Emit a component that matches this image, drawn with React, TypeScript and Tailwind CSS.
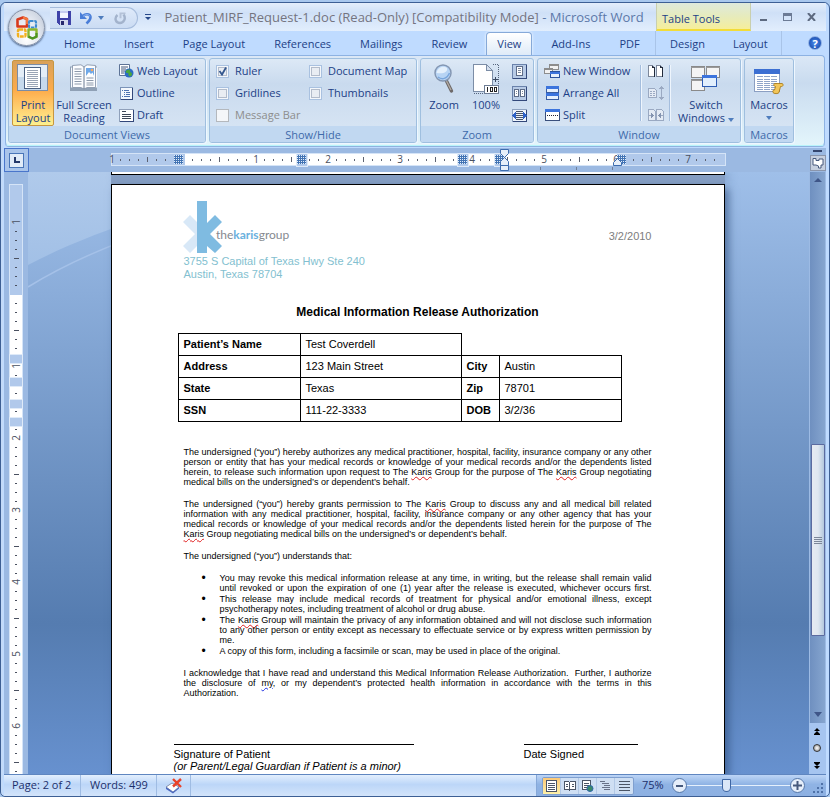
import { useState } from "react";
import type { ReactNode } from "react";

/* ---------- ribbon and window icons ---------- */

const OfficeLogo = () => (
  <svg viewBox="0 0 26 26" className="size-[26px]" fill="none" strokeLinejoin="round">
    <path d="M3.500 4.500 9 2.500l4 1.500v7.500H3.500z" stroke="#d8391b" strokeWidth="2.600" />
    <path d="M9 2.500 13 4v5" stroke="#f47a3e" strokeWidth="2" />
    <rect x="15" y="6" width="7" height="6.500" rx="1" stroke="#3f8bd0" strokeWidth="2.200" strokeDasharray="3.500 .8" />
    <rect x="4" y="14.500" width="7.500" height="7" rx="1" stroke="#f3b01c" strokeWidth="2.400" strokeDasharray="4 .7" />
    <path d="M14.500 14.500h8v7.500l-4 1.500-4-1.500z" stroke="#8bb52c" strokeWidth="2.400" />
    <path d="M14.500 21.500 18.500 23.500 22.500 21.500V18" stroke="#4d9424" strokeWidth="2.200" />
  </svg>
);

const SaveIcon = () => (
  <svg viewBox="0 0 14 14" className="size-[14px]" shapeRendering="crispEdges">
    <path d="M0 0h14v14H2L0 12z" fill="#3e42a8" />
    <path d="M3 0h8v7H3z" fill="#f2f6ff" />
    <path d="M3 0h8v2H3z" fill="#c5cdf0" />
    <path d="M3 9h8v5H3z" fill="#d3d8ee" />
    <path d="M4 10h3v4H4z" fill="#27296e" />
  </svg>
);

const UndoIcon = () => (
  <svg viewBox="0 0 14 14" className="size-[14px]" fill="none">
    <path d="M1 1v7h7z" fill="#4a7ed8" />
    <path d="M3 6c3-4 8-3.500 8.500 0 .3 3-2 4.500-4 6.500" stroke="#4a7ed8" strokeWidth="2.600" />
    <path d="M4 5.500c3-3 6-2.500 6.800 0" stroke="#8db4f2" strokeWidth="1" />
  </svg>
);

const RedoIcon = () => (
  <svg viewBox="0 0 14 14" className="size-[14px]" fill="none">
    <path d="M10.500 3.500c3 4 0 8.500-3.500 8.500-4.500 0-6-5-2.500-8" stroke="#a3b3cc" strokeWidth="2.400" />
    <path d="M6.500 1.500h6v1.800h-4v4h-2z" fill="#b4c2d8" />
  </svg>
);

const PrintLayoutIcon = () => (
  <svg viewBox="0 0 32 28" className="h-[28px] w-[32px]" shapeRendering="crispEdges">
    <rect x=".5" y=".5" width="30" height="26" fill="#c6d9ec" stroke="#7b8ca5" />
    <path d="M1 1h29v12H1z" fill="#e3edf7" />
    <rect x="7.500" y="3.500" width="16" height="21" fill="#fff" stroke="#4b6182" />
    {[6, 8, 10, 12, 14, 16, 18, 20, 22].map((y) => (
      <path key={y} d={`M10 ${y}.5h11`} stroke="#9aa5b6" />
    ))}
  </svg>
);

const ReadingIcon = () => (
  <svg viewBox="0 0 30 28" className="h-[28px] w-[30px]">
    <path d="M1 2.500h3l8-1.500 3 2 3-2 8 1.500h2V27H1z" fill="#8fa0b5" />
    <path d="M2 3.500h10l3 1v20l-3-1H2z" fill="#f7f9fc" />
    <path d="M28 3.500H18l-3 1v20l3-1h10z" fill="#f7f9fc" />
    <path d="M3.500 1.500 12 .8l3 2.200 3-2.200 8.500.7v22H18l-3 1.500-3-1.500H3.500z" fill="#fcfdff" stroke="#7d8da3" strokeWidth=".8" />
    {[5, 7.5, 10, 12.5, 15, 17.5, 20].map((y) => (
      <path key={y} d={`M5.500 ${y}H12.500`} stroke="#8d99aa" strokeWidth="1" />
    ))}
    {[14, 16.5, 19, 21].map((y) => (
      <path key={y} d={`M17.500 ${y}H24.500`} stroke="#8d99aa" strokeWidth="1" />
    ))}
    <path d="M15 3v22" stroke="#6b7b92" />
    <rect x="17" y="4" width="8" height="8" fill="#6fa8e8" />
    <path d="m17 12 3-4 2 2 1.500-1.500L25 12z" fill="#fff" />
    <circle cx="23" cy="6" r="1.300" fill="#f4a860" />
  </svg>
);

const WebLayoutIcon = () => (
  <svg viewBox="0 0 15 14" className="h-[14px] w-[15px]">
    <path d="M.5.5h10v11H.5z" fill="#fff" stroke="#5d7396" />
    <path d="M2 3h7M2 5h5M2 7h4M2 9h3" stroke="#45597c" />
    <circle cx="10" cy="9" r="4.500" fill="#2d6cc4" />
    <path d="M7 7c2-2 4-2 4 0s2 1 2 3-2 3-3 2 0-3-1.500-3S6.500 8.500 7 7z" fill="#4aa63c" />
  </svg>
);

const OutlineIcon = () => (
  <svg viewBox="0 0 13 13" className="size-[13px]" shapeRendering="crispEdges">
    <rect x=".5" y=".5" width="12" height="12" fill="#f4f8fd" stroke="#7b93b8" />
    <path d="M12.500 1v12M1 12.500h12" stroke="#33487a" />
    <path d="M2 3.500h1M4 3.500h5M4 5.500h1M6 5.500h4M4 7.500h1M6 7.500h4M2 9.500h1M4 9.500h6" stroke="#4f73b0" />
  </svg>
);

const DraftIcon = () => (
  <svg viewBox="0 0 15 13" className="h-[13px] w-[15px]" shapeRendering="crispEdges">
    <rect x=".5" y=".5" width="14" height="12" fill="#fff" stroke="#8fa0ba" />
    <path d="M14.500 1v12M1 12.500h14" stroke="#33487a" />
    <path d="M3 2.500h4M3 5.500h9M3 7.500h9M3 9.500h9" stroke="#3c4656" />
  </svg>
);

const ZoomIcon = () => (
  <svg viewBox="0 0 20 30" className="h-[30px] w-[20px]" fill="none">
    <path d="m12.500 17 5 10" stroke="#6e6a6a" strokeWidth="3.400" strokeLinecap="round" />
    <path d="m12.500 17 4.500 9" stroke="#b4aca4" strokeWidth="1.200" />
    <circle cx="9" cy="9" r="8" fill="#b7d4f4" stroke="#8497b3" strokeWidth="1.500" />
    <path d="M2.500 9C3 4 9 1 13 4c1 4-3 6-10.500 5z" fill="#e4f0fc" />
    <path d="M4 13c4 3 9 2 11.500-4" stroke="#79a6dc" strokeWidth="1.500" />
  </svg>
);

const Page100Icon = () => (
  <svg viewBox="0 0 27 31" className="h-[31px] w-[27px]" shapeRendering="crispEdges">
    <path d="M20 .5h5.500V22M1 29.500h11" fill="none" stroke="#56657d" strokeDasharray="1 1" />
    <path d="M.5.500h13l6 6v20.500H.5z" fill="#fff" stroke="#7c8da6" />
    <path d="M13.500.5v6h6z" fill="#d6e0ee" stroke="#7c8da6" />
    <path d="M20 15.500h5M22.500 13v5" stroke="#3b4a62" />
    <rect x="11.500" y="21.500" width="14" height="8" fill="#fff" stroke="#6e7e96" />
    <path d="M14.500 23v5M17.500 23.500h2v4h-2zM21.500 23.500h2v4h-2z" fill="none" stroke="#222" />
  </svg>
);

const OnePageIcon = () => (
  <svg viewBox="0 0 15 15" className="size-[15px]" shapeRendering="crispEdges">
    <rect x=".5" y=".5" width="14" height="14" fill="#b8cbe6" stroke="#6a82ab" />
    <path d="M14.500 1v14M1 14.500h14" stroke="#33487a" />
    <rect x="4.500" y="2.500" width="6" height="9" fill="#fff" stroke="#5d6c88" />
    <path d="M6 4.500h3M6 6.500h3M6 8.500h3" stroke="#7e8ba0" />
  </svg>
);

const TwoPagesIcon = () => (
  <svg viewBox="0 0 15 15" className="size-[15px]" shapeRendering="crispEdges">
    <rect x=".5" y=".5" width="14" height="14" fill="#b8cbe6" stroke="#6a82ab" />
    <path d="M14.500 1v14M1 14.500h14" stroke="#33487a" />
    <rect x="2.500" y="3.500" width="4" height="7" fill="#fff" stroke="#5d6c88" />
    <rect x="8.500" y="3.500" width="4" height="7" fill="#fff" stroke="#5d6c88" />
    <path d="M4 5.500h1M4 7.500h1M10 5.500h1M10 7.500h1" stroke="#7e8ba0" />
  </svg>
);

const PageWidthIcon = () => (
  <svg viewBox="0 0 15 13" className="h-[13px] w-[15px]" shapeRendering="crispEdges">
    <rect x=".5" y=".5" width="14" height="12" fill="#eef4fb" stroke="#8ea2c0" />
    <path d="M14.500 1v12M1 12.500h14" stroke="#33487a" />
    <path d="M4 2.500h7M4 4.500h7M4 6.500h7M4 8.500h7M4 10.500h7" stroke="#4a5568" />
    <path d="m0 6.500 4-4v8zM15 6.500l-4-4v8z" fill="#2d62c8" />
  </svg>
);

const NewWindowIcon = () => (
  <svg viewBox="0 0 16 14" className="h-[14px] w-[16px]" shapeRendering="crispEdges">
    <rect x="5.500" y=".5" width="9" height="5" fill="#f2f2f2" stroke="#8d8d8d" />
    <path d="M5 1.500h10" stroke="#8d8d8d" />
    <rect x=".5" y="4.500" width="8" height="5" fill="#f2f2f2" stroke="#8d8d8d" />
    <path d="M0 5.500h9" stroke="#8d8d8d" />
    <rect x="6.500" y="7.500" width="9" height="6" fill="#e6f0fd" stroke="#28519f" />
    <path d="M6 8h10v2H6z" fill="#3c74dd" />
  </svg>
);

const ArrangeIcon = () => (
  <svg viewBox="0 0 13 14" className="h-[14px] w-[13px]" shapeRendering="crispEdges">
    <rect x=".5" y=".5" width="12" height="6" fill="#e6f0fd" stroke="#3a5da0" />
    <path d="M0 0h13v3H0z" fill="#3c74dd" />
    <rect x=".5" y="7.500" width="12" height="6" fill="#e6f0fd" stroke="#3a5da0" />
    <path d="M0 7h13v3H0z" fill="#3c74dd" />
  </svg>
);

const SplitIcon = () => (
  <svg viewBox="0 0 15 12" className="h-[12px] w-[15px]" shapeRendering="crispEdges">
    <rect x=".5" y=".5" width="14" height="11" fill="#fff" stroke="#3a4f7c" />
    <path d="M0 0h15v3H0z" fill="#3c74dd" />
    <path d="M2 6.500h11" stroke="#223" strokeDasharray="1 1" />
  </svg>
);

const SideBySideIcon = () => (
  <svg viewBox="0 0 16 12" className="h-[12px] w-[16px]" shapeRendering="crispEdges">
    <path d="M.5.5h4l2 2v9h-6zM8.500.5h4l2 2v9h-6z" fill="#fff" stroke="#7c879a" />
    <path d="M6.500 3v9H1M14.500 3v9H9M4.500.5v2h2M12.500.5v2h2" fill="none" stroke="#222b3c" />
  </svg>
);

const SyncScrollIcon = () => (
  <svg viewBox="0 0 16 14" className="h-[14px] w-[16px]" shapeRendering="crispEdges" fill="none" stroke="#9aa9c2">
    <path d="M.5 2.500h6l2 2v7h-8z" fill="#e4ebf5" />
    <path d="M2 5.500h2M5 5.500h2M2 7.500h2M5 7.500h2M2 9.500h2M5 9.500h2M13.500 3v8" />
    <path d="m11 3 2.500-3L16 3zM11 11l2.500 3 2.500-3z" fill="#9aa9c2" stroke="none" />
  </svg>
);

const ResetPositionIcon = () => (
  <svg viewBox="0 0 16 12" className="h-[12px] w-[16px]" shapeRendering="crispEdges" fill="none" stroke="#9aa9c2">
    <path d="M.5.5h5l2 2v9h-7zM8.500.5h5l2 2v9h-7z" fill="#e4ebf5" />
    <path d="M1 6.500h3M12 6.500h3" />
    <path d="m3 4 3 2.500L3 9zM13 4l-3 2.500L13 9z" fill="#8494b0" stroke="none" />
  </svg>
);

const SwitchWindowsIcon = () => (
  <svg viewBox="0 0 30 26" className="h-[26px] w-[30px]" shapeRendering="crispEdges">
    {[
      [0, 0],
      [15, 0],
      [0, 13],
    ].map(([x, y]) => (
      <g key={`${x}-${y}`}>
        <rect x={x + 0.5} y={y + 0.5} width="13" height="11" fill="#f4f4f4" stroke="#8a8a8a" />
        <path d={`M${x} ${y + 1}h14v1h-14z`} fill="#9a9a9a" />
      </g>
    ))}
    <rect x="11.500" y="9.500" width="14" height="11" fill="#e2effd" stroke="#2d5cb4" />
    <path d="M11 9h15v3H11z" fill="#3c74dd" />
  </svg>
);

const MacrosIcon = () => (
  <svg viewBox="0 0 30 26" className="h-[26px] w-[30px]">
    <g shapeRendering="crispEdges">
      <rect x=".5" y=".5" width="25" height="22" fill="#fff" stroke="#8b9fc2" />
      <path d="M0 0h26v5H0z" fill="#3c6fd2" />
      {[7, 10, 12, 14, 16, 18, 20].map((y) => (
        <path key={y} d={`M3 ${y}.5h6M10 ${y}.5h6M17 ${y}.5h6`} stroke="#8fa4c8" />
      ))}
    </g>
    <path d="M20.500 14.500h7.500c1.500 0 1.500 3-.5 3h-1l-1.500 6c-.3 1.500-5.500 1.500-6 0-.5-2 0-2.500 1.500-2.500l1-3.500c-1.500 0-2.500-2-1-3z" fill="#f2c65a" stroke="#a5730f" strokeWidth=".8" />
  </svg>
);

const KarisLogo = () => (
  <svg viewBox="0 0 112 54" className="-ml-px h-[54px] w-[112px]" role="img" aria-label="the karis group">
    <path d="M0 22 7 15l7 7v24l-7 7-7-7 12-12z" fill="#d8e8f7" />
    <path d="m24 23 8-8 7 7-12 12 12 12-7 7-8-7z" fill="#7fbbe1" />
    <path d="M14 1h10v52H14z" fill="#7fbbe1" />
    <text x="33" y="39" fontSize="12" className="font-['Lato','Open_Sans',sans-serif]" fill="#85898f">
      the<tspan fill="#6bb1de" fontWeight="700">karis</tspan>group
    </text>
  </svg>
);

const ProofIcon = () => (
  <svg viewBox="0 0 18 16" className="h-[16px] w-[18px]">
    <path d="m1 9 6-4 7 4-6 5z" fill="#fff" stroke="#8490ad" />
    <path d="m1 9 7 5v1.500L1 11zM8 14l6-5v1.500l-6 5z" fill="#4b68c0" />
    <path d="m8 1 8 8M16 1 8 8.500" stroke="#e8432a" strokeWidth="2.400" />
  </svg>
);

const Caret = () => <span className="inline-block border-x-[3px] border-t-[4px] border-x-transparent border-t-[#4f7dbd]" />;

/* ---------- ribbon pieces ---------- */

function Group({ title, className, children }: { title: string; className: string; children: ReactNode }) {
  return (
    <section
      aria-label={title}
      className={`flex shrink-0 flex-col overflow-hidden rounded-[3px] border border-[#9fbfdf] bg-linear-to-b from-[#dde9f6] via-[#c9daee] via-30% to-[#dae7f5] shadow-[1px_1px_0_#eef7ff] ${className}`}
    >
      <div className="flex h-[68px] items-start pt-px">{children}</div>
      <h2 className="flex h-[16px] items-center justify-center bg-[#c1d8f1] text-[11px] leading-none text-[#3e6aaa]">{title}</h2>
    </section>
  );
}

/* caret: "inline" follows the last word, "below" takes a line of its own */
function BigButton({ icon, label, caret, active, className }: { icon: ReactNode; label: string; caret?: "inline" | "below"; active?: boolean; className: string }) {
  return (
    <button
      aria-pressed={active}
      className={`flex h-[66px] shrink-0 flex-col items-center rounded-[2px] border text-center leading-[13px] ${
        active ? "border-[#c79640] bg-linear-to-b from-[#d9a159] via-[#fdab4a] via-45% to-[#fdf08f]" : "border-transparent"
      } ${className}`}
    >
      <span className="flex h-[37px] items-start pt-[3px]">{icon}</span>
      <span>
        {label}
        {caret === "inline" && (
          <span className="ml-[3px] inline-flex h-[8px] items-center">
            <Caret />
          </span>
        )}
      </span>
      {caret === "below" && (
        <span className="flex h-[13px] items-center">
          <Caret />
        </span>
      )}
    </button>
  );
}

function SmallButton({ icon, label }: { icon: ReactNode; label: string }) {
  return (
    <button className="flex h-[22px] items-center gap-[3px] whitespace-nowrap">
      <span className="flex w-[16px] justify-center">{icon}</span>
      {label}
    </button>
  );
}

function IconButton({ icon, label }: { icon: ReactNode; label: string }) {
  return (
    <button aria-label={label} className="flex h-[22px] w-[16px] items-center justify-center">
      {icon}
    </button>
  );
}

function Check({ label, checked, disabled }: { label: string; checked?: boolean; disabled?: boolean }) {
  return (
    <label className={`flex h-[22px] items-center gap-[6px] whitespace-nowrap ${disabled ? "text-[#8d8d8d]" : ""}`}>
      <span className="grid">
        <input
          type="checkbox"
          defaultChecked={checked}
          disabled={disabled}
          className="peer col-start-1 row-start-1 size-[13px] appearance-none border border-[#a9c1e0] bg-[#e9edf3] shadow-[inset_0_0_0_1px_#f4f7fb,inset_0_0_0_2px_#b3bccb] disabled:border-[#b4b8bd] disabled:bg-[#f4f6f9] disabled:shadow-none"
        />
        <svg viewBox="0 0 13 13" className="pointer-events-none col-start-1 row-start-1 hidden size-[13px] peer-checked:block" fill="none">
          <path d="m3.500 6 2.500 3.500L10 2.500" stroke="#35588f" strokeWidth="1.800" />
        </svg>
      </span>
      {label}
    </label>
  );
}

function Tab({ label, active }: { label: string; active?: boolean }) {
  return active ? (
    <button
      role="tab"
      aria-selected="true"
      className="mx-[4px] h-[23px] self-end rounded-t-[4px] border border-b-0 border-[#86a9d8] bg-linear-to-b from-white to-[#dfebf8] px-[10px] shadow-[0_0_3px_#ffffff]"
    >
      {label}
    </button>
  ) : (
    <button role="tab" aria-selected="false" className="px-[14px] pt-[3px] whitespace-nowrap">
      {label}
    </button>
  );
}

/* ---------- rulers ---------- */

const gridMarks = [67, 190, 351, 388, 510];

function HorizontalRuler() {
  const ticks = Array.from({ length: 67 }, (_, i) => i + 1);
  return (
    <svg viewBox="0 0 615 24" className="h-[24px] w-[615px] shrink-0 overflow-visible" shapeRendering="crispEdges" aria-label="Horizontal ruler">
      <rect x=".5" y="5.500" width="614" height="12" fill="#b1c9eb" stroke="#d5e4f7" />
      <path d="M74 6h432v11H74z" fill="#fff" />
      {[190, 351, 388].map((x) => (
        <path key={x} d={`M${x - 5} 5h11v13h-11z`} fill="#b1c9eb" stroke="#dfeaf8" />
      ))}
      {ticks.map((i) =>
        i % 8 === 0 ? null : (
          <path key={i} d={i % 4 === 0 ? `M${i * 9}.5 9v5` : `M${i * 9}.5 10.500v2`} stroke="#5d6270" />
        ),
      )}
      {[1, 0, 1, 2, 3, 4, 5, 6, 7].map((n, i) =>
        n === 0 ? null : (
          <text key={i} x={i * 72 + 1} y="15" fontSize="10" textAnchor="middle" fill="#4a5060" className="font-['Open_Sans',sans-serif]">
            {n}
          </text>
        ),
      )}
      {gridMarks.map((x) => (
        <g key={x} stroke="#4374b4">
          <path d={`M${x - 4} 7h9v9h-9z`} fill="#e4eefa" stroke="none" />
          <path d={`M${x - 2.5} 7v9M${x - 0.5} 7v9M${x + 1.5} 7v9M${x + 3.5} 7v9M${x - 4} 8.500h9M${x - 4} 10.500h9M${x - 4} 12.500h9M${x - 4} 14.500h9`} />
        </g>
      ))}
      <g fill="#e6effa" stroke="#3d6cae" shapeRendering="auto">
        <path d="M389.500 1.500h8v4l-4 4-4-4zM393.500 9.500l4 4v4h-8v-4zM389.500 17.500h8v5h-8z" />
        <path d="m502.500 17.500v-3l4-4 4 4v3z" />
      </g>
      <path d="M429.500 19v3M465.500 19v3M501.500 19v3" stroke="#6f7f99" />
    </svg>
  );
}

function VerticalRuler() {
  const ticks = Array.from({ length: 64 }, (_, i) => i + 1);
  return (
    <svg viewBox="0 0 14 620" className="h-[620px] w-[14px] shrink-0" shapeRendering="crispEdges" aria-label="Vertical ruler">
      <rect x=".5" y=".5" width="13" height="640" fill="#b1c9eb" stroke="#d5e4f7" />
      <path d="M1 111h12v520H1z" fill="#fff" />
      {ticks.map((i) => {
        const y = 38 + i * 9;
        if (i % 8 === 0 || y > 618) return null;
        return <path key={i} d={i % 4 === 0 ? `M5 ${y}.5h5` : `M6 ${y}.5h2`} stroke="#4a5060" />;
      })}
      {[170, 193, 215, 233].map((y) => (
        <path key={y} d={`M.5 ${y}.5h13v9H.5z`} fill="#b1c9eb" stroke="#dfeaf8" />
      ))}
      {[1, 0, 1, 2, 3, 4, 5, 6].map((n, i) =>
        n === 0 ? null : (
          <text
            key={i}
            x="0"
            y="0"
            fontSize="10"
            textAnchor="middle"
            fill="#4a5060"
            transform={`translate(11 ${38 + i * 72}) rotate(-90)`}
            className="font-['Open_Sans',sans-serif]"
          >
            {n}
          </text>
        ),
      )}
    </svg>
  );
}

/* ---------- document ---------- */

const Misspelt = ({ children }: { children: ReactNode }) => (
  <span className="underline decoration-[#e02020] decoration-wavy decoration-1 underline-offset-1">{children}</span>
);
const Karis = () => <Misspelt>Karis</Misspelt>;

/* Every line but the last one runs to both margins. */
function Lines({ lines, full }: { lines: ReactNode[]; full?: boolean }) {
  return (
    <>
      {lines.map((line, i) => (
        <span
          key={i}
          className={`block whitespace-nowrap ${i < lines.length - 1 || full ? "text-justify [text-align-last:justify]" : ""}`}
        >
          {line}
        </span>
      ))}
    </>
  );
}

const bullets: { lines: ReactNode[]; full?: boolean }[] = [
  {
    full: true,
    lines: [
      "You may revoke this medical information release at any time, in writing, but the release shall remain valid",
      "until revoked or upon the expiration of one (1) year after the release is executed, whichever occurs first.",
    ],
  },
  {
    lines: [
      "This release may include medical records of treatment for physical and/or emotional illness, except",
      "psychotherapy notes, including treatment of alcohol or drug abuse.",
    ],
  },
  {
    lines: [
      <>
        The <Karis /> Group will maintain the privacy of any information obtained and will not disclose such information
      </>,
      "to any other person or entity except as necessary to effectuate service or by express written permission by",
      "me.",
    ],
  },
  { lines: ["A copy of this form, including a facsimile or scan, may be used in place of the original."] },
];

function Document() {
  const cell = "h-[22px] border border-black px-[5px]";
  return (
    <article className="w-[614px] flex-1 border border-b-0 border-black bg-white px-[72px] pt-[15px] font-['Liberation_Sans',Arial,sans-serif] text-[11px] leading-[13px] text-black shadow-[4px_4px_8px_#2b4a7799]">
      <header className="flex justify-between">
        <div>
          <KarisLogo />
          <address className="mt-px whitespace-nowrap text-[#83bfd0] not-italic">
            3755 S Capital of Texas Hwy Ste 240
            <br />
            Austin, Texas 78704
          </address>
        </div>
        <time className="pt-[30px] text-[#7d7d7d]">3/2/2010</time>
      </header>
      <h1 className="mt-[23px] text-center text-[12px] leading-[16px] font-bold">Medical Information Release Authorization</h1>
      <table className="mt-[13px] -ml-[6px] w-[444px] table-fixed border-collapse text-left">
        <colgroup>
          <col className="w-[122px]" />
          <col className="w-[161px]" />
          <col className="w-[38px]" />
          <col className="w-[122px]" />
        </colgroup>
        <tbody>
          <tr>
            <th scope="row" className={cell}>Patient’s Name</th>
            <td className={cell}>Test Coverdell</td>
          </tr>
          <tr>
            <th scope="row" className={cell}>Address</th>
            <td className={cell}>123 Main Street</td>
            <th scope="row" className={cell}>City</th>
            <td className={cell}>Austin</td>
          </tr>
          <tr>
            <th scope="row" className={cell}>State</th>
            <td className={cell}>Texas</td>
            <th scope="row" className={cell}>Zip</th>
            <td className={cell}>78701</td>
          </tr>
          <tr>
            <th scope="row" className={cell}>SSN</th>
            <td className={cell}>111-22-3333</td>
            <th scope="row" className={cell}>DOB</th>
            <td className={cell}>3/2/36</td>
          </tr>
        </tbody>
      </table>
      <div className="mt-[25px] flex flex-col gap-[12px] text-[9px] leading-[10px]">
        <p>
          <Lines
            lines={[
              "The undersigned (“you”) hereby authorizes any medical practitioner, hospital, facility, insurance company or any other",
              "person or entity that has your medical records or knowledge of your medical records and/or the dependents listed",
              <>
                herein, to release such information upon request to The <Karis /> Group for the purpose of The <Karis /> Group negotiating
              </>,
              "medical bills on the undersigned’s or dependent’s behalf.",
            ]}
          />
        </p>
        <p>
          <Lines
            lines={[
              <>
                The undersigned (“you”) hereby grants permission to The <Karis /> Group to discuss any and all medical bill related
              </>,
              "information with any medical practitioner, hospital, facility, insurance company or any other agency that has your",
              "medical records or knowledge of your medical records and/or the dependents listed herein for the purpose of The",
              <>
                <Karis /> Group negotiating medical bills on the undersigned’s or dependent’s behalf.
              </>,
            ]}
          />
        </p>
        <p>The undersigned (“you”) understands that:</p>
        <ul className="flex flex-col gap-px pl-[18px]">
          {bullets.map((b, i) => (
            <li key={i} className="flex">
              <span aria-hidden="true" className="w-[18px] shrink-0 text-[12px]">•</span>
              <div className="flex-1">
                <Lines lines={b.lines} full={b.full} />
              </div>
            </li>
          ))}
        </ul>
        <p>
          <Lines
            lines={[
              "I acknowledge that I have read and understand this Medical Information Release Authorization.\u00a0 Further, I authorize",
              <>
                the disclosure of{" "}
                <span className="underline decoration-[#2030e0] decoration-wavy decoration-1 underline-offset-1">my</span>, or my dependent’s
                protected health information in accordance with the terms in this
              </>,
              "Authorization.",
            ]}
          />
        </p>
      </div>
      <footer className="mt-[46px] -ml-[10px] flex gap-[110px] leading-[12px] whitespace-nowrap">
        <p className="w-[240px] border-t border-black pt-[3px]">
          Signature of Patient
          <br />
          <em>(or Parent/Legal Guardian if Patient is a minor)</em>
        </p>
        <p className="w-[114px] border-t border-black pt-[3px]">Date Signed</p>
      </footer>
    </article>
  );
}

/* ---------- window frame ---------- */

function TitleBar() {
  return (
    <header className="flex h-[28px] shrink-0 items-stretch bg-linear-to-b from-[#e4eefb] via-[#cfe0f7] via-35% to-[#e2eefd] pl-[46px]">
      <div className="mt-[4px] flex h-[22px] w-[88px] shrink-0 items-center rounded-r-full border border-l-0 border-[#a6bcdc] bg-linear-to-b from-[#dfeafa] to-[#cbdcf3] pl-[7px]">
        <button aria-label="Save"><SaveIcon /></button>
        <button aria-label="Undo" className="ml-[8px]"><UndoIcon /></button>
        <button aria-label="Undo list" className="ml-[5px] flex"><Caret /></button>
        <button aria-label="Redo" className="ml-[9px]"><RedoIcon /></button>
      </div>
      <button aria-label="Customize Quick Access Toolbar" className="ml-[6px] flex w-[8px] flex-col items-center justify-center gap-[2px]">
        <span className="h-px w-[6px] bg-[#25488a]" />
        <span className="border-x-[3px] border-t-[3px] border-x-transparent border-t-[#25488a]" />
      </button>
      <div className="flex min-w-0 flex-1 items-center justify-center pt-px text-[13px] whitespace-nowrap text-[#5c78a8]">
        <span>
          <span className="text-[#74747f]">Patient_MIRF_Request-1.doc (Read-Only) [Compatibility Mode]</span> - Microsoft Word
        </span>
      </div>
      <div className="flex w-[95px] shrink-0 items-center border-x border-b-2 border-x-[#c9cfae] border-b-[#f2dc38] bg-linear-to-b from-[#dfe9dc] via-[#e6ebbd] to-[#f6ee9a] pt-[6px] pl-[5px]">
        Table Tools
      </div>
      <div className="flex w-[75px] shrink-0 items-center justify-between pr-[10px] pl-[9px] text-[#5d6a80]">
        <button aria-label="Minimize" className="pt-[6px]">
          <span className="block h-[2px] w-[7px] bg-[#5d6a80]" />
        </button>
        <button aria-label="Restore" className="block h-[8px] w-[9px] border border-t-[3px] border-[#6c7b95]" />
        <button aria-label="Close">
          <svg viewBox="0 0 9 8" className="h-[8px] w-[9px]" stroke="#5d6a80" strokeWidth="2">
            <path d="m1 0 7 8M8 0 1 8" />
          </svg>
        </button>
      </div>
    </header>
  );
}

function TabBar() {
  return (
    <nav role="tablist" className="flex h-[24px] shrink-0 items-stretch gap-px bg-[#bfdbff] pl-[46px]">
      {["Home", "Insert", "Page Layout", "References", "Mailings", "Review"].map((t) => (
        <Tab key={t} label={t} />
      ))}
      <Tab label="View" active />
      <Tab label="Add-Ins" />
      <Tab label="PDF" />
      <div className="ml-auto flex w-[127px] border-x border-[#a9c4e8]">
        <Tab label="Design" />
        <Tab label="Layout" />
      </div>
      <div className="flex w-[43px] items-center justify-end pr-[4px]">
        <button aria-label="Help" className="size-[14px] rounded-full border border-[#8fb0e4] bg-radial from-[#4c8cf0] to-[#123f9e] text-[11px] leading-[11px] font-bold text-white">
          ?
        </button>
      </div>
    </nav>
  );
}

function Ribbon() {
  return (
    <div className="mx-px flex h-[91px] shrink-0 gap-[3px] rounded-[4px] border border-[#8db2e3] border-b-[#b8f4fb] bg-linear-to-b from-[#dbe8f6] via-[#c9dbef] via-30% to-[#e3f5fb] p-[2px] shadow-[0_1px_0_#8fb3de]">
      <Group title="Document Views" className="w-[198px]">
        <BigButton active className="ml-[3px] w-[42px]" icon={<PrintLayoutIcon />} label="Print Layout" />
        <BigButton className="w-[60px]" icon={<ReadingIcon />} label="Full Screen Reading" />
        <div className="ml-[4px] flex flex-col">
          <SmallButton icon={<WebLayoutIcon />} label="Web Layout" />
          <SmallButton icon={<OutlineIcon />} label="Outline" />
          <SmallButton icon={<DraftIcon />} label="Draft" />
        </div>
      </Group>
      <Group title="Show/Hide" className="w-[208px]">
        <div className="flex w-[99px] flex-col pl-[6px]">
          <Check label="Ruler" checked />
          <Check label="Gridlines" />
          <Check label="Message Bar" disabled />
        </div>
        <div className="flex flex-col">
          <Check label="Document Map" />
          <Check label="Thumbnails" />
        </div>
      </Group>
      <Group title="Zoom" className="w-[114px]">
        <BigButton className="ml-[2px] w-[42px]" icon={<ZoomIcon />} label="Zoom" />
        <BigButton className="w-[42px]" icon={<Page100Icon />} label="100%" />
        <div className="ml-[4px] flex flex-col">
          <IconButton icon={<OnePageIcon />} label="One Page" />
          <IconButton icon={<TwoPagesIcon />} label="Two Pages" />
          <IconButton icon={<PageWidthIcon />} label="Page Width" />
        </div>
      </Group>
      <Group title="Window" className="w-[204px]">
        <div className="ml-[6px] flex w-[97px] flex-col">
          <SmallButton icon={<NewWindowIcon />} label="New Window" />
          <SmallButton icon={<ArrangeIcon />} label="Arrange All" />
          <SmallButton icon={<SplitIcon />} label="Split" />
        </div>
        <div className="mt-[5px] h-[56px] w-px bg-[#eef5fd] shadow-[-1px_0_0_#a4bddd]" />
        <div className="mx-[6px] flex flex-col">
          <IconButton icon={<SideBySideIcon />} label="View Side by Side" />
          <IconButton icon={<SyncScrollIcon />} label="Synchronous Scrolling" />
          <IconButton icon={<ResetPositionIcon />} label="Reset Window Position" />
        </div>
        <div className="mt-[5px] h-[56px] w-px bg-[#eef5fd] shadow-[-1px_0_0_#a4bddd]" />
        <BigButton caret="inline" className="ml-[2px] w-[66px]" icon={<span className="pt-[2px]"><SwitchWindowsIcon /></span>} label="Switch Windows" />
      </Group>
      <Group title="Macros" className="w-[50px]">
        <BigButton caret="below" className="w-[48px]" icon={<span className="pt-[5px]"><MacrosIcon /></span>} label="Macros" />
      </Group>
    </div>
  );
}

function Swoosh() {
  return (
    <svg viewBox="0 0 781 602" preserveAspectRatio="none" className="absolute inset-0 size-full" aria-hidden="true">
      <defs>
        <linearGradient id="sky" x1="0" y1="0" x2="0" y2="1">
          <stop offset="0" stopColor="#b0caeb" />
          <stop offset="1" stopColor="#a2c0e6" />
        </linearGradient>
      </defs>
      <path d="M0 0h260C180 24 70 56 0 93z" fill="url(#sky)" />
      <path d="M0 115C50 84 130 50 260 20" stroke="#a5c1e8" strokeWidth="1.500" fill="none" />
    </svg>
  );
}

function ScrollBar() {
  return (
    <div className="flex w-[17px] shrink-0 flex-col bg-[#a6c5f0]">
      <div className="flex flex-1 flex-col items-center border-x border-[#9dbbe4] bg-linear-to-r from-[#6f90c0] to-[#86a5cf]">
        <button aria-label="Scroll up" className="flex h-[16px] items-center">
          <span className="border-x-[4px] border-b-[4px] border-x-transparent border-b-[#3f5688]" />
        </button>
        <div className="flex-[257]" />
        <div className="flex w-[14px] flex-[191] flex-col items-center justify-center gap-px rounded-[1px] border border-[#5b6ba0] bg-linear-to-r from-[#e6ebf2] via-[#dfe7f0] to-[#b4c8de]">
          <span className="h-px w-[8px] bg-[#7c8799]" />
          <span className="h-px w-[8px] bg-[#7c8799]" />
          <span className="h-px w-[8px] bg-[#7c8799]" />
          <span className="h-px w-[8px] bg-[#7c8799]" />
        </div>
        <div className="flex-[70]" />
        <button aria-label="Scroll down" className="flex h-[17px] items-center">
          <span className="border-x-[4px] border-t-[5px] border-x-transparent border-t-[#3f5688]" />
        </button>
      </div>
      <div className="flex h-[51px] flex-col items-center justify-around pr-[2px]">
        <button aria-label="Previous page">
          <svg viewBox="0 0 6 7" className="h-[7px] w-[6px]" fill="#000"><path d="M0 3 3 0l3 3zM0 6l3-3 3 3zM0 6h6v1H0z" /></svg>
        </button>
        <button aria-label="Select browse object" className="size-[8px] rounded-full border border-[#333] bg-radial from-white to-[#8b8b8b]" />
        <button aria-label="Next page">
          <svg viewBox="0 0 6 7" className="h-[7px] w-[6px]" fill="#000"><path d="M0 0h6v1H0zM0 1l3 3 3-3zM0 4l3 3 3-3z" /></svg>
        </button>
      </div>
    </div>
  );
}

function ViewIcon({ kind }: { kind: string }) {
  return (
    <svg viewBox="0 0 13 12" className="h-[12px] w-[13px]" shapeRendering="crispEdges" fill="none" stroke="#4b5566">
      {kind === "Print Layout" && <path d="M1.500.5h10v11h-10zM3 3.500h7M3 5.500h7M3 7.500h7M3 9.500h7" fill="#fff" />}
      {kind === "Full Screen Reading" && (
        <path d="M1 1.500h4l1.500 1L8 1.500h4v8H8l-1.500 1-1.500-1H1zM6.500 2v9M2.500 4.500h2M2.500 6.500h2M8.500 4.500h2M8.500 6.500h2" fill="#fff" />
      )}
      {kind === "Web Layout" && (
        <>
          <path d="M1.500.5h8v9h-8zM3 3.500h5M3 5.500h5M3 7.500h3" fill="#fff" />
          <circle cx="9" cy="8.500" r="3" fill="#3a8a6a" stroke="#2f66a8" shapeRendering="auto" />
        </>
      )}
      {kind === "Outline" && <path d="M1 1.500h5M3 3.500h7M5 5.500h6M3 7.500h8M5 9.500h6" stroke="#67728a" />}
      {kind === "Draft" && <path d="M1 1.500h11M1 4.500h11M1 7.500h11M1 10.500h11" />}
    </svg>
  );
}

function StatusBar() {
  const [zoom, setZoom] = useState(37);
  const [view, setView] = useState("Print Layout");
  return (
    <footer className="flex h-[22px] shrink-0 items-stretch border-t border-[#5f86c0] bg-linear-to-b from-[#e3effd] via-[#bcd6f8] via-45% to-[#d3e4fa] text-[#1b2f6b]">
      <button className="w-[77px] border-r border-[#9fbce3] pl-[8px] text-left whitespace-nowrap">Page: 2 of 2</button>
      <button className="w-[76px] border-r border-[#9fbce3] pl-[9px] text-left whitespace-nowrap">Words: 499</button>
      <button aria-label="Proofing errors" className="flex w-[34px] items-center justify-center border-r border-[#9fbce3]">
        <ProofIcon />
      </button>
      <div className="ml-auto flex items-center border-l border-[#86a8d8] bg-linear-to-b from-[#bdd5f6] via-[#8fb3e4] via-45% to-[#8db0e2] pl-[5px]">
        <div className="flex h-[18px] rounded-[2px] border border-[#7f9fcf] bg-[#cfdff3]">
          {["Print Layout", "Full Screen Reading", "Web Layout", "Outline", "Draft"].map((v) => (
            <button
              key={v}
              aria-label={v}
              aria-pressed={v === view}
              onClick={() => setView(v)}
              className={`flex w-[18px] items-center justify-center border-r border-[#b3c9e6] last:border-r-0 ${v === view ? "bg-linear-to-b from-[#fbc878] to-[#fdf0a8]" : ""}`}
            >
              <ViewIcon kind={v} />
            </button>
          ))}
        </div>
        <button className="ml-[8px] w-[30px] text-left">75%</button>
        <button aria-label="Zoom out" className="flex size-[15px] items-center justify-center rounded-full border border-[#5476a8] bg-[#e5eefa]">
          <span className="h-[2px] w-[7px] bg-[#46597c]" />
        </button>
        <input
          type="range"
          aria-label="Zoom"
          min={0}
          max={100}
          value={zoom}
          onChange={(e) => setZoom(Number(e.target.value))}
          className="h-[14px] w-[103px] appearance-none bg-[linear-gradient(#e6f0fc,#e6f0fc)] bg-[length:100%_1px] bg-center bg-no-repeat [&::-webkit-slider-thumb]:h-[13px] [&::-webkit-slider-thumb]:w-[9px] [&::-webkit-slider-thumb]:appearance-none [&::-webkit-slider-thumb]:rounded-t-[1px] [&::-webkit-slider-thumb]:rounded-b-[5px] [&::-webkit-slider-thumb]:border [&::-webkit-slider-thumb]:border-[#3f66a3] [&::-webkit-slider-thumb]:bg-[#dbe7f7]"
        />
        <button aria-label="Zoom in" className="flex size-[15px] items-center justify-center rounded-full border border-[#5476a8] bg-[#e5eefa]">
          <svg viewBox="0 0 9 9" className="size-[9px]" stroke="#46597c" strokeWidth="2"><path d="M4.500 0v9M0 4.500h9" /></svg>
        </button>
        <svg viewBox="0 0 12 12" className="mt-[4px] mr-[2px] ml-[7px] size-[12px]" fill="#4f72a8" shapeRendering="crispEdges">
          <path d="M9 1h2v2H9zM5 5h2v2H5zM9 5h2v2H9zM1 9h2v2H1zM5 9h2v2H5zM9 9h2v2H9z" />
        </svg>
      </div>
    </footer>
  );
}

export default function App() {
  return (
    <div className="h-screen w-full min-w-[830px] overflow-hidden bg-[#a9c8ee] pt-[2px] font-['Open_Sans','Noto_Sans',sans-serif] text-[11px] text-[#1c3f86]">
      <div className="relative flex h-full flex-col overflow-hidden rounded-t-[6px] rounded-b-[5px] border border-[#3d5f94] bg-[#bfdbff] shadow-[inset_2px_0_0_#c3daf8]">
        <div className="flex min-h-0 flex-1 flex-col px-[3px]">
          <TitleBar />
          <TabBar />
          <Ribbon />
          <div className="mt-[2px] flex h-[24px] shrink-0 bg-[#9bb9e2]">
            <button aria-label="Tab selector" className="flex h-[24px] w-[25px] shrink-0 items-center justify-center border border-[#4a76cb] bg-[#a9c4ea]">
              <span className="flex size-[15px] items-center justify-center border border-[#4a76b8] bg-[#e1ebf8]">
                <span className="size-[6px] border-b-2 border-l-2 border-[#24386b]" />
              </span>
            </button>
            <div className="flex min-w-0 flex-1 justify-center pr-[2px]">
              <HorizontalRuler />
            </div>
            <div className="flex w-[17px] shrink-0 flex-col items-center gap-[3px] pt-[2px]">
              <span className="h-[2px] w-[9px] bg-[#35466e]" />
              <button aria-label="View Ruler" className="flex size-[16px] items-center justify-center border border-[#8a95ab] bg-[#c6cfde]">
                <svg viewBox="0 0 12 12" className="size-[12px]" fill="#fff" stroke="#46597c">
                  <path d="M1 1.500h3v2h3v-1.500h4v6H9v3H6.500V9L4 8H1z" />
                </svg>
              </button>
            </div>
          </div>
          <div className="flex min-h-0 flex-1">
            <div className="flex w-[24px] shrink-0 justify-center overflow-hidden bg-[#9bb9e2] pt-[12px]">
              <VerticalRuler />
            </div>
            <main className="relative flex min-w-0 flex-1 flex-col overflow-hidden bg-linear-to-b from-[#9fbfe9] via-[#557cb0] via-75% to-[#6791cf]">
              <Swoosh />
              <div className="relative flex min-h-0 flex-1 flex-col items-center pr-[2px]">
                <div className="h-[3px] w-[614px] shrink-0 border border-t-0 border-black bg-white shadow-[4px_4px_8px_#2b4a7799]" />
                <div className="h-[9px] w-[614px] shrink-0 bg-[#869fc4]" />
                <Document />
              </div>
            </main>
            <ScrollBar />
          </div>
          <div className="-mx-[3px] px-[3px]">
            <StatusBar />
          </div>
        </div>
        <button
          aria-label="Office Button"
          className="absolute top-[6px] left-[7px] flex size-[37px] items-center justify-center rounded-full border border-[#8793a8] bg-radial-[at_50%_80%] from-white via-[#e3e8f0] to-[#b9c3d3] shadow-[0_1px_2px_#44597c]"
        >
          <OfficeLogo />
        </button>
      </div>
    </div>
  );
}
